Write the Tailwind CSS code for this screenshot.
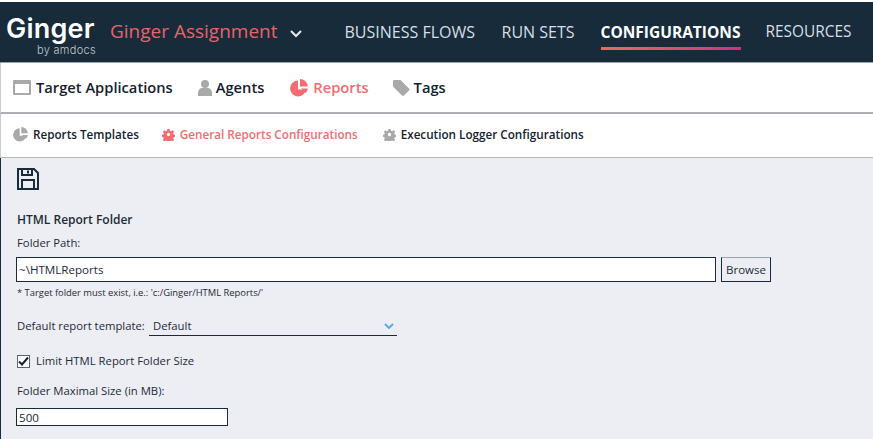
<!DOCTYPE html>
<html lang="en">
<head>
    <meta charset="UTF-8">
    <title>Ginger - Configurations</title>
    <script src="https://cdn.jsdelivr.net/npm/@tailwindcss/browser@4"></script>
</head>
<body class="bg-white font-['Open_Sans',sans-serif] text-[#18293a] overflow-hidden">
    <div class="w-[873px] h-[439px] flex flex-col overflow-hidden">
        <!-- Top bar -->
        <nav class="mt-[2px] h-[61px] shrink-0 bg-[#172b3a] flex items-start border-b border-[#9aa3ab]">
            <div class="ml-[6px] mt-[14px] w-[90px] text-white">
                <div class="font-['Inter',sans-serif] font-semibold text-[27px] leading-[26px] tracking-[0.2px]">Ginger</div>
                <div class="font-['Inter',sans-serif] font-light text-[11px] leading-[10px] mt-[3px] text-[#c5c9cd] ml-[31px] whitespace-nowrap tracking-[0.3px]">by amdocs</div>
            </div>
            <div class="ml-[14px] mt-[16px] text-[19px] leading-[26px] text-[#e8636a] whitespace-nowrap">Ginger Assignment</div>
            <svg class="ml-[12px] mt-[28px]" width="12" height="8" viewBox="0 0 12 8" fill="none" stroke="#e6eaee" stroke-width="2"><path d="M1 1l5 5 5-5"/></svg>
            <div class="ml-[43px] flex leading-[22px] text-[#d8dfe5] mt-[19px]">
                <a class="block w-[157px] text-[16px] whitespace-nowrap">BUSINESS FLOWS</a>
                <a class="block w-[99px] text-[16px] whitespace-nowrap">RUN SETS</a>
                <a class="block w-[165px] text-[15.500px] font-bold text-white whitespace-nowrap"><span class="block w-[140px]">CONFIGURATIONS</span>
                    <span class="block w-[140px] h-[3px] mt-[4px] bg-gradient-to-r from-[#e0705f] to-[#c9327f]"></span>
                </a>
                <a class="block text-[15.400px] whitespace-nowrap">RESOURCES</a>
            </div>
        </nav>

        <!-- Main tabs -->
        <div class="h-[51px] shrink-0 flex items-center border-l border-[#c8ccd0] pl-[12px] text-[14.700px] font-semibold text-[#14222e] border-b-2 border-b-[#aeaeb4]">
            <svg class="mr-[5px]" width="18" height="15" viewBox="0 0 18 15"><rect x="0" y="0" width="18" height="15" rx="1" fill="#a9a9a9"/><rect x="2" y="4" width="14" height="9" fill="#fff"/></svg>
            <span class="whitespace-nowrap">Target Applications</span>
            <svg class="ml-[25px] mr-[4px]" width="14" height="16" viewBox="0 0 14 16" fill="#a9a9a9"><circle cx="7" cy="4" r="4"/><path d="M0 16v-3c0-3 2-5 4-5h6c2 0 4 2 4 5v3z"/></svg>
            <span>Agents</span>
            <svg class="ml-[26px] mr-[5px]" width="18" height="18" viewBox="0 0 18 18" fill="#f36c72"><path d="M8 1.500a8 8 0 1 0 8 9h-8z"/><path d="M10 0a8 8 0 0 1 7.800 7.500h-7.800z"/><path d="M11 9.500h6.800a8 8 0 0 1-2 4.500z"/></svg>
            <span class="text-[#f36c72]">Reports</span>
            <svg class="ml-[24px] mr-[4px]" width="17" height="16" viewBox="0 0 17 16" fill="#a9a9a9"><path d="M0 1.500v5l9 9c.6.600 1.400.600 2 0l5-5c.6-.6.600-1.400 0-2l-9-9h-5.500c-.8 0-1.500.7-1.500 2z"/></svg>
            <span>Tags</span>
        </div>

        <!-- Sub tabs -->
        <div class="h-[44px] shrink-0 flex items-center border-l border-[#c8ccd0] pl-[12px] pb-[2px] text-[11.700px] font-semibold text-[#14222e] border-b border-b-[#b5b5bb]">
            <svg class="mr-[5px]" width="15" height="15" viewBox="0 0 18 18" fill="#a9a9a9"><path d="M8 1.500a8 8 0 1 0 8 9h-8z"/><path d="M10 0a8 8 0 0 1 7.800 7.500h-7.800z"/><path d="M11 9.500h6.800a8 8 0 0 1-2 4.500z"/></svg>
            <span class="whitespace-nowrap">Reports Templates</span>
            <svg class="ml-[23px] mr-[5px]" width="13" height="13" viewBox="0 0 20 20" fill="#f36c72"><path fill-rule="evenodd" d="M8 0h4l.6 3 2.200.9 2.600-1.700 2.800 2.800-1.700 2.600.9 2.200 3 .6v4l-3 .6-.9 2.200 1.700 2.600-2.800 2.800-2.600-1.700-2.200.9-.6 3h-4l-.6-3-2.200-.9-2.600 1.700-2.800-2.800 1.700-2.600-.9-2.200-3-.6v-4l3-.6.9-2.200-1.700-2.600 2.800-2.800 2.600 1.700 2.200-.9zM10 7a3 3 0 1 0 0 6 3 3 0 0 0 0-6z" transform="translate(1.500 1.500) scale(.85)"/></svg>
            <span class="text-[#f36c72] whitespace-nowrap">General Reports Configurations</span>
            <svg class="ml-[25px] mr-[5px]" width="13" height="13" viewBox="0 0 20 20" fill="#a9a9a9"><path fill-rule="evenodd" d="M8 0h4l.6 3 2.200.9 2.600-1.700 2.800 2.800-1.700 2.600.9 2.200 3 .6v4l-3 .6-.9 2.200 1.700 2.600-2.800 2.800-2.600-1.700-2.200.9-.6 3h-4l-.6-3-2.200-.9-2.600 1.700-2.800-2.800 1.700-2.600-.9-2.200-3-.6v-4l3-.6.9-2.200-1.700-2.600 2.800-2.800 2.600 1.700 2.200-.9zM10 7a3 3 0 1 0 0 6 3 3 0 0 0 0-6z" transform="translate(1.500 1.500) scale(.85)"/></svg>
            <span class="whitespace-nowrap">Execution Logger Configurations</span>
        </div>

        <!-- Form -->
        <main class="flex-1 bg-[#edeef3] border-l border-[#172b3a] pl-[15px] text-[11.300px] text-[#1c2b38]">
            <svg class="mt-[10px] ml-[1px]" width="22" height="22" viewBox="0 0 22 22" fill="none" stroke="#172b3a" stroke-width="2"><path d="M1 1h16l4 4v16h-20z"/><path d="M5 1v6h10v-6M5 21v-9h12v9"/><path d="M11 2.500v3" /></svg>
            <div class="mt-[22px] ml-[1px] text-[12px] font-semibold leading-[16px]">HTML Report Folder</div>
            <div class="mt-[7px] ml-[1px] leading-[16px]">Folder Path:</div>
            <div class="mt-[6px] flex gap-[5px]">
                <input value="~\HTMLReports" class="w-[700px] h-[25px] bg-white border border-[#172b3a] px-[2px] text-[11.600px] outline-none">
                <button class="w-[50px] h-[25px] border border-[#172b3a] border-t-[#9aa3ab] text-[11.500px]">Browse</button>
            </div>
            <div class="mt-[4px] ml-[1px] text-[9.400px] leading-[14px]">* Target folder must exist, i.e.: 'c:/Ginger/HTML Reports/'</div>
            <div class="mt-[17px] ml-[1px] flex items-start leading-[16px]">
                <span class="mt-[1px] w-[132px] whitespace-nowrap">Default report template:</span>
                <div class="w-[248px] h-[19px] flex justify-between border-b border-[#172b3a] pl-[4px] pr-[3px] pt-[1px]">
                    <span>Default</span>
                    <svg class="mt-[5px]" width="10" height="7" viewBox="0 0 10 7" fill="none" stroke="#4ea6ea" stroke-width="1.800"><path d="M1 1l4 4 4-4"/></svg>
                </div>
            </div>
            <div class="mt-[17px] ml-[1px] flex items-center leading-[16px]">
                <span class="w-[13px] h-[13px] mr-[6px] bg-white border border-[#5c6670] flex items-center justify-center">
                    <svg width="11" height="11" viewBox="0 0 11 11" fill="none" stroke="#18232d" stroke-width="2"><path d="M1 5.500l3 3 6-7"/></svg>
                </span>
                Limit HTML Report Folder Size
            </div>
            <div class="mt-[14px] ml-[1px] leading-[16px]">Folder Maximal Size (in MB):</div>
            <input value="500" class="mt-[9px] block w-[212px] h-[18px] bg-white border border-[#172b3a] px-[2px] text-[11.600px] outline-none">
        </main>
    </div>
</body>
</html>
